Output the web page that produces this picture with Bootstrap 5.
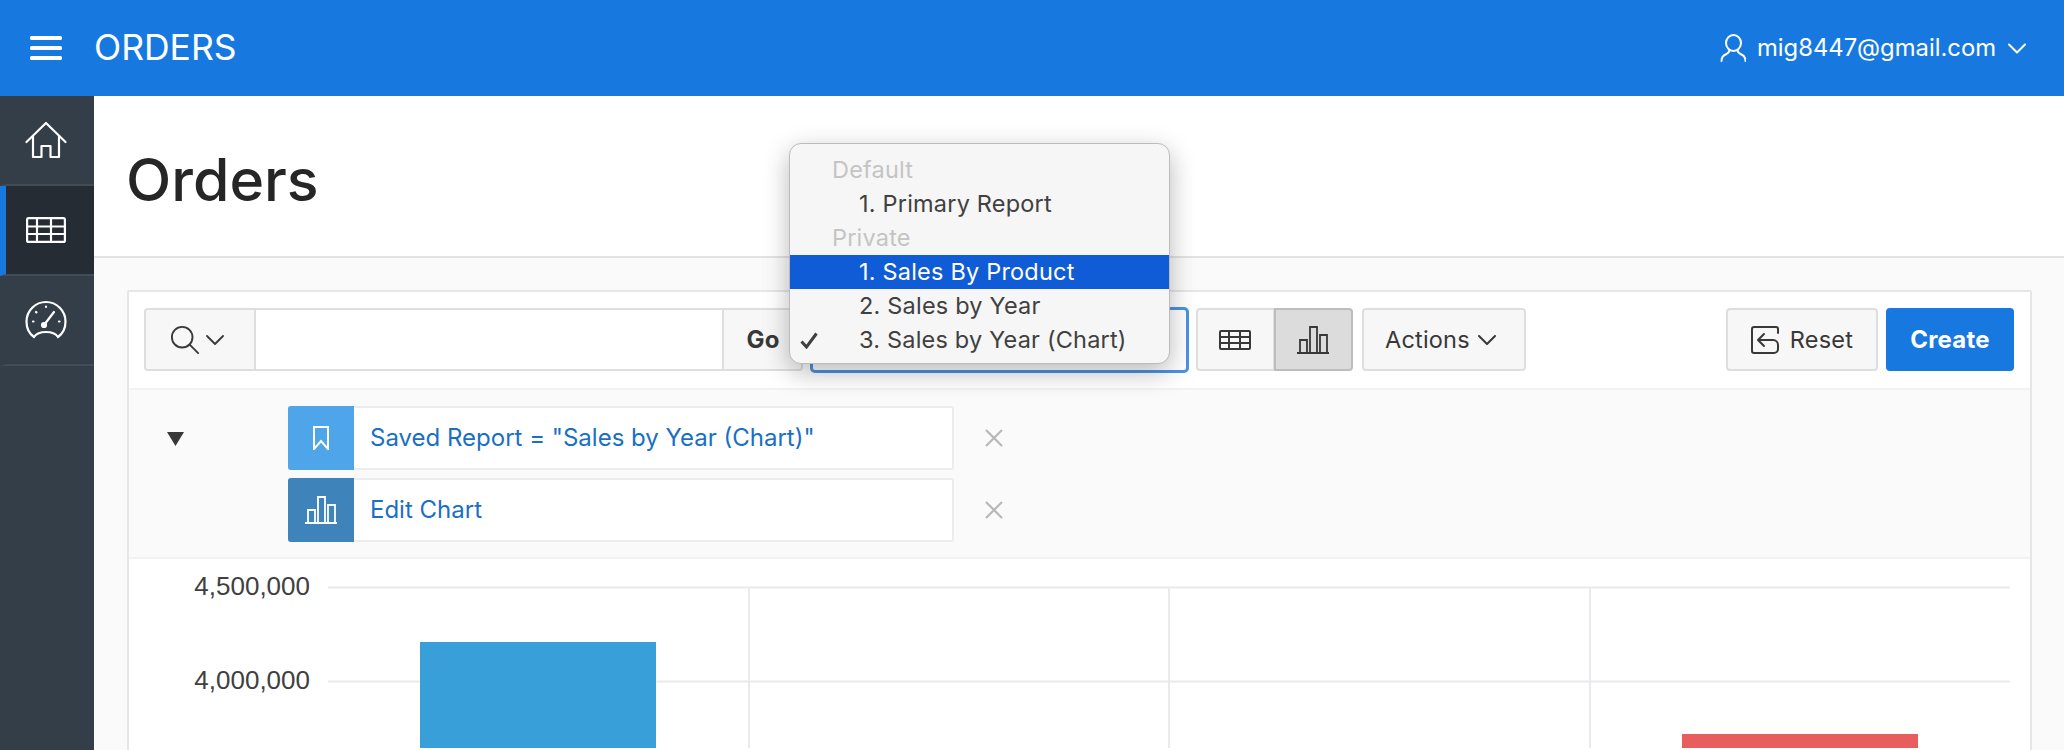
<!DOCTYPE html>
<html lang="en">
<head>
<meta charset="utf-8">
<title>Orders</title>
<link href="https://cdn.jsdelivr.net/npm/bootstrap@5.3.0/dist/css/bootstrap.min.css" rel="stylesheet">
<style>
html,body{height:750px;overflow:hidden}
body{font-family:Inter,"Liberation Sans",sans-serif;background:#fff;color:#262626}
.topbar{height:96px;background:#1779e0;color:#fff;padding:0}
.burger{width:32px;margin-left:30px;margin-right:32px}
.appname{font-size:35.500px;line-height:40px;color:#fff;letter-spacing:0}
.usermenu{font-size:23.800px;color:#fff;margin-right:38px}
.usericon{margin-right:3px}
.usermenu .chev{margin-left:4px}
.bodyrow{height:654px}
.sidenav{width:94px;background:#333e48;flex:none}
.sideitem{height:90px;border-bottom:2px solid #424c56;border-left:6px solid transparent;padding-right:8px}
.sideitem.current{background:#262c33;border-left-color:#1779e0}
.mainarea{min-width:0}
.titlebar{height:162px;border-bottom:2px solid #e3e3e3;padding-left:32px}
.titlebar h1{font-size:59px;font-weight:500;margin:0;color:#262626;line-height:1;padding-top:6px}
.pagebody{background:#fafafa;padding:32px 32px 0 33px;height:492px;overflow:hidden}
.region{border:2px solid #e6e6e6;background:#fff;border-radius:2px 2px 0 0;height:480px;overflow:hidden}
.rtools{height:98px;padding:16px 16px 0 15px;gap:8px;border-bottom:2px solid #f2f2f2}
.rbtn{--bs-btn-bg:#f7f7f7;--bs-btn-border-color:#dedede;--bs-btn-color:#383838;--bs-btn-hover-bg:#f7f7f7;--bs-btn-hover-border-color:#dedede;--bs-btn-hover-color:#383838;--bs-btn-border-width:2px;--bs-btn-border-radius:4px;--bs-btn-font-size:23.5px;height:63px;display:inline-flex;align-items:center;justify-content:center;padding:0;letter-spacing:.2px}
.searchgrp{width:659px;height:63px;flex:none}
.searchgrp .rbtn{flex:none}
.searchgrp .sbtn{width:112px;gap:6px;padding-right:6px}
.searchgrp .gobtn{width:81px;font-weight:700;font-size:24px;padding-right:0;padding-left:1px}
.searchgrp .form-control{border:2px solid #dedede;border-left:0;border-right:0;border-radius:0;height:63px;box-shadow:none}
.reportsel{width:379px;height:66px;flex:none;border:3px solid #4a93e6;border-radius:5px;background:#fff;color:#383838;font-size:23px;padding:0;appearance:none;margin:-1px -2px 0 -1px}
.viewgrp{width:157px;flex:none;margin-left:1px}
.viewgrp .rbtn{height:63px}
.viewgrp .vleft{width:78px}
.viewgrp .vright{width:79px;--bs-btn-bg:#dcdcdc;--bs-btn-hover-bg:#dcdcdc;--bs-btn-border-color:#bdbdbd;--bs-btn-hover-border-color:#bdbdbd;background:#dcdcdc}
.actbtn{width:164px;gap:8px;margin-left:1px;justify-content:flex-start;padding-left:21px}
.resetbtn{width:152px;gap:11px}
.createbtn{--bs-btn-bg:#1779e0;--bs-btn-border-color:#1779e0;--bs-btn-color:#fff;--bs-btn-hover-bg:#1779e0;--bs-btn-hover-border-color:#1779e0;--bs-btn-hover-color:#fff;width:128px;font-weight:700;--bs-btn-font-size:24px}
.chipzone{height:169px;background:#fafafa;padding:16px 0 0 0;border-bottom:2px solid #f2f2f2}
.twisty{width:159px;flex:none;padding-left:38px;padding-top:19px}
.chiprow{height:64px;margin-bottom:8px}
.chip{width:666px;height:64px;border:2px solid #ececec;border-left:0;background:#fff;border-radius:0 3px 3px 0;font-size:24px;color:#1a6fc4;margin-left:0}
.chipicon{width:66px;height:64px;flex:none;border-radius:3px 0 0 3px;margin-right:16px}
.chipicon.lt{background:#4ea5ea}
.chipicon.dk{background:#3f83bb}
.chipx{color:#b8b8b8;margin-left:30px;width:20px}
.chartbox{display:block;width:1900px;height:189px}
.chartlbl{font-family:"Liberation Sans",sans-serif;font-size:26px;fill:#404040}
.savedmenu{position:absolute;left:789px;top:143px;width:381px;height:221px;display:block;margin:0;background:#f6f6f6;border:1px solid #bcbcbc;border-radius:12px;box-shadow:0 8px 26px rgba(0,0,0,.28);padding:9px 0 0;--bs-dropdown-min-width:0;z-index:20;overflow:hidden}
.saveditem{height:34px;line-height:34px;font-size:23.5px;color:#404040;padding:0 0 0 69px;position:relative;letter-spacing:.2px}
.saveditem.grp{color:#c4c4c4;padding-left:42px}
.saveditem.sel{background:#0f5cd6;color:#fff}
.checkmark{position:absolute;left:10px;top:9px}
</style>
</head>
<body>
<nav class="navbar topbar d-flex flex-nowrap align-items-center justify-content-between">
  <div class="d-flex align-items-center">
    <svg class="burger" viewBox="0 0 32 24" height="24" aria-hidden="true"><g fill="#fff"><rect y="0" width="32" height="4" rx="1.5"/><rect y="10" width="32" height="4" rx="1.5"/><rect y="20" width="32" height="4" rx="1.5"/></g></svg>
    <span class="appname">ORDERS</span>
  </div>
  <div class="usermenu d-flex align-items-center gap-2">
    <svg class="usericon" width="26" height="28" viewBox="0 0 26 28" fill="none" stroke="#fff" stroke-width="2" stroke-linecap="round" aria-hidden="true"><ellipse cx="13.5" cy="9" rx="7.5" ry="8"/><path d="M9.500 16c0 2-1 3-3.500 4.300C3 21.500 1.500 23 1.500 27M17.500 16c0 2 1 3 3.500 4.300 3 1.200 4.500 2.700 4.500 6.700"/></svg>
    <span>mig8447@gmail.com</span>
    <svg class="chev" width="18" height="11" viewBox="0 0 18 11" fill="none" stroke="#fff" stroke-width="2" stroke-linecap="round" stroke-linejoin="round" aria-hidden="true"><path d="M1 1.500l8 8 8-8"/></svg>
  </div>
</nav>
<div class="d-flex bodyrow">
  <aside class="sidenav d-flex flex-column">
    <div class="sideitem d-flex align-items-center justify-content-center">
      <svg width="42" height="38" viewBox="0 0 42 38" fill="none" stroke="#fff" stroke-width="2.200" stroke-linejoin="round" stroke-linecap="round" aria-hidden="true"><path d="M1.500 21L21 2l19.500 19M8 15.500V36h8.500V25h9v11H34V15.500"/></svg>
    </div>
    <div class="sideitem current d-flex align-items-center justify-content-center">
      <svg width="40" height="26" viewBox="0 0 40 26" fill="none" stroke="#fff" stroke-width="2.200" aria-hidden="true"><rect x="1.100" y="1.100" width="37.800" height="23.800" rx="1.500"/><path d="M1 9.500h38M1 17h38M11 1v24M25 1v24"/></svg>
    </div>
    <div class="sideitem d-flex align-items-center justify-content-center">
      <svg width="42" height="40" viewBox="0 0 42 40" fill="none" stroke="#fff" stroke-width="2.200" stroke-linecap="round" aria-hidden="true"><path d="M9 37C4 33.500 1.500 28 1.500 21.500a19.500 19.500 0 0 1 39 0C40.500 28 38 33.500 33 37c-2-3-6-5-12-5s-10 2-12 5z"/><path d="M19 25L29 12"/><circle cx="19" cy="25" r="2" fill="#fff"/><path d="M21 6.500v.5M8 21.500h.5M34 21.500h.5M11 12l.4.4"/></svg>
    </div>
  </aside>
  <main class="mainarea flex-grow-1">
    <div class="titlebar d-flex align-items-center"><h1>Orders</h1></div>
    <div class="pagebody">
      <section class="region">
        <div class="rtools d-flex align-items-start">
          <div class="input-group searchgrp flex-nowrap">
            <button type="button" class="btn rbtn sbtn" aria-label="Search">
              <svg width="30" height="30" viewBox="0 0 32 32" fill="none" stroke="#383838" stroke-width="2" stroke-linecap="round" aria-hidden="true"><circle cx="13" cy="13" r="11"/><path d="M21 21l9 9"/></svg>
              <svg width="18" height="10" viewBox="0 0 18 10" fill="none" stroke="#383838" stroke-width="1.800" stroke-linecap="round" stroke-linejoin="round" aria-hidden="true"><path d="M1 1l8 8 8-8"/></svg>
            </button>
            <input type="text" class="form-control" aria-label="Search">
            <button type="button" class="btn rbtn gobtn">Go</button>
          </div>
          <select class="reportsel" aria-label="Report"><option></option></select>
          <div class="btn-group viewgrp">
            <button type="button" class="btn rbtn vleft" aria-label="Report view">
              <svg width="32" height="20" viewBox="0 0 32 20" fill="none" stroke="#383838" stroke-width="2" aria-hidden="true"><rect x="1" y="1" width="30" height="18" rx="1"/><path d="M1 7h30M1 13h30M10 1v18M21 1v18"/></svg>
            </button>
            <button type="button" class="btn rbtn vright" aria-label="Chart view">
              <svg width="32" height="28" viewBox="0 0 32 28" fill="none" stroke="#383838" stroke-width="1.800" aria-hidden="true"><path d="M0 27h32M3 27V14h7v13M13 27V1h7v26M23 27V9h7v18"/></svg>
            </button>
          </div>
          <button type="button" class="btn rbtn actbtn">Actions
            <svg width="18" height="10" viewBox="0 0 18 10" fill="none" stroke="#383838" stroke-width="2" stroke-linecap="round" stroke-linejoin="round" aria-hidden="true"><path d="M1 1l8 8 8-8"/></svg>
          </button>
          <button type="button" class="btn rbtn resetbtn ms-auto">
            <svg width="28" height="28" viewBox="0 0 28 28" fill="none" stroke="#383838" stroke-width="2" stroke-linecap="round" stroke-linejoin="round" aria-hidden="true"><path d="M27 7V3a2 2 0 0 0-2-2H3a2 2 0 0 0-2 2v22a2 2 0 0 0 2 2h20a4 4 0 0 0 4-4v-4a5 5 0 0 0-5-5H8M13 8l-6 6 6 6"/></svg>
            Reset
          </button>
          <button type="button" class="btn rbtn createbtn">Create</button>
        </div>
        <div class="chipzone d-flex">
          <div class="twisty"><svg width="17" height="14" viewBox="0 0 17 14" aria-hidden="true"><path d="M0 0h17L8.500 14z" fill="#383838"/></svg></div>
          <div>
            <div class="chiprow d-flex align-items-center">
              <div class="chip d-flex align-items-center">
                <div class="chipicon lt d-flex align-items-center justify-content-center">
                  <svg width="16" height="24" viewBox="0 0 16 24" fill="none" stroke="#fff" stroke-width="2" aria-hidden="true"><path d="M1 1h14v22l-7-8-7 8z"/></svg>
                </div>
                <span>Saved Report = "Sales by Year (Chart)"</span>
              </div>
              <svg class="chipx" width="20" height="20" viewBox="0 0 20 20" stroke="#b8b8b8" stroke-width="2.200" aria-label="Remove" role="img"><path d="M2 2l16 16M18 2L2 18"/></svg>
            </div>
            <div class="chiprow d-flex align-items-center">
              <div class="chip d-flex align-items-center">
                <div class="chipicon dk d-flex align-items-center justify-content-center">
                  <svg width="32" height="28" viewBox="0 0 32 28" fill="none" stroke="#fff" stroke-width="1.800" aria-hidden="true"><path d="M0 27h32M3 27V14h7v13M13 27V1h7v26M23 27V9h7v18"/></svg>
                </div>
                <span>Edit Chart</span>
              </div>
              <svg class="chipx" width="20" height="20" viewBox="0 0 20 20" stroke="#b8b8b8" stroke-width="2.200" aria-label="Remove" role="img"><path d="M2 2l16 16M18 2L2 18"/></svg>
            </div>
          </div>
        </div>
        <svg class="chartbox" viewBox="0 0 1900 189" role="img" aria-label="Sales chart">
          <g stroke="#e9eaee" stroke-width="2">
            <path d="M199 28.500H1881M199 122.500H1881"/>
            <path d="M620 28v161M1040 28v161M1461 28v161"/>
          </g>
          <rect x="291" y="83" width="236" height="106" fill="#389fd9"/>
          <rect x="1553" y="175" width="236" height="14" fill="#e85d5d"/>
          <text class="chartlbl" x="181" y="36" text-anchor="end">4,500,000</text>
          <text class="chartlbl" x="181" y="130" text-anchor="end">4,000,000</text>
        </svg>
      </section>
    </div>
  </main>
</div>
<div class="dropdown-menu savedmenu show" role="menu">
  <div class="saveditem grp">Default</div>
  <div class="saveditem">1. Primary Report</div>
  <div class="saveditem grp">Private</div>
  <div class="saveditem sel">1. Sales By Product</div>
  <div class="saveditem">2. Sales by Year</div>
  <div class="saveditem"><svg class="checkmark" width="18" height="17" viewBox="0 0 18 17" fill="none" stroke="#404040" stroke-width="3" aria-hidden="true"><path d="M1.500 9.500l5 5.500L16.500 1.500"/></svg>3. Sales by Year (Chart)</div>
</div>
<script src="https://cdn.jsdelivr.net/npm/bootstrap@5.3.0/dist/js/bootstrap.bundle.min.js"></script>
</body>
</html>
